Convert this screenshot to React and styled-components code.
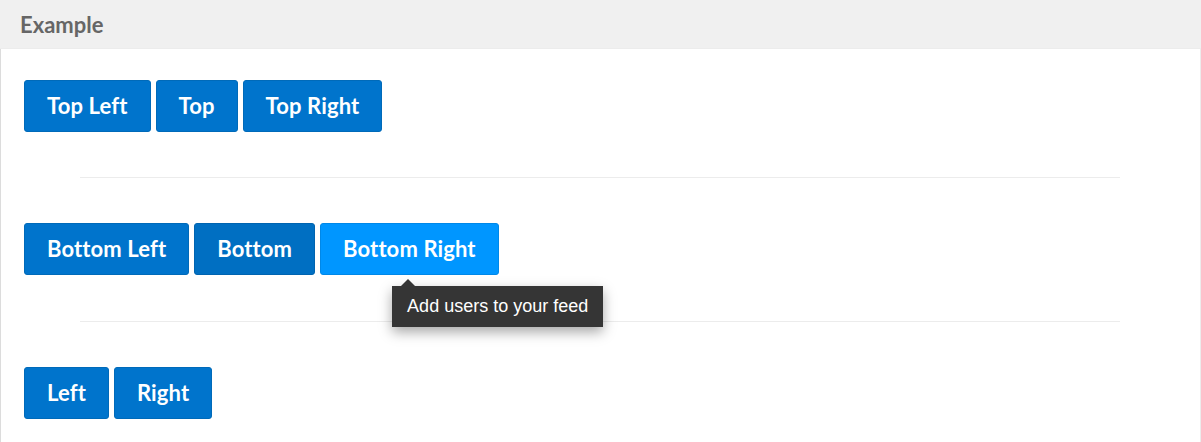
import React from "react";
import styled, { createGlobalStyle } from "styled-components";

const Global = createGlobalStyle`
  html, body { margin: 0; padding: 0; background: #fff; }
  body { font-family: Lato, "Noto Sans", sans-serif; }
`;

const Panel = styled.div`
  width: 1201px;
  height: 442px;
  box-sizing: border-box;
  display: flex;
  flex-direction: column;
  overflow: hidden;
`;

const Header = styled.div`
  height: 48px;
  flex: none;
  background: #f0f0f0;
  display: flex;
  align-items: center;
  padding: 0 20px;
  font-family: Lato, sans-serif;
  font-weight: 700;
  font-size: 22px;
  color: #666;
  border-bottom: 1px solid #ececec;
`;

const Body = styled.div`
  flex: 1;
  border-left: 1px solid #dcdcdc;
  border-right: 1px solid #ececec;
  padding: 31px 0 0 23px;
  display: flex;
  flex-direction: column;
`;

const Row = styled.div`
  display: flex;
  gap: 5px;
  position: relative;
`;

const Divider = styled.hr`
  border: 0;
  border-top: 1px solid #ececec;
  margin: ${(p) => p.$top || 45}px 80px 45px 56px;
  height: 0;
`;

const palette = {
  normal: { bg: "#0074cc", border: "#006ab9" },
  active: { bg: "#006fc2", border: "#0064b0" },
  hover: { bg: "#0096ff", border: "#0088e8" },
};

const Button = styled.button`
  height: 52px;
  box-sizing: border-box;
  padding: 0 22px;
  border: 1px solid ${(p) => palette[p.$state || "normal"].border};
  background: ${(p) => palette[p.$state || "normal"].bg};
  border-radius: 3px;
  color: #fff;
  font-family: Lato, sans-serif;
  font-weight: 700;
  font-size: 22px;
  letter-spacing: 0.12px;
  line-height: 1;
  cursor: pointer;
  position: relative;
`;

const Tooltip = styled.div`
  position: absolute;
  top: 63px;
  left: 72px;
  background: #353535;
  color: #fff;
  font-family: "Liberation Sans", Arial, sans-serif;
  font-size: 18px;
  font-weight: 400;
  white-space: nowrap;
  padding: 0 15px;
  height: 41px;
  display: flex;
  align-items: center;
  box-shadow: 0 5px 12px rgba(0, 0, 0, 0.35);
  z-index: 2;
  &::before {
    content: "";
    position: absolute;
    top: -7px;
    left: 9px;
    border-left: 7px solid transparent;
    border-right: 7px solid transparent;
    border-bottom: 7px solid #353535;
  }
`;

const BRWrap = styled.div`
  position: relative;
  display: flex;
`;

export default function App() {
  return (
    <>
      <Global />
      <Panel>
        <Header>Example</Header>
        <Body>
          <Row>
            <Button>Top Left</Button>
            <Button>Top</Button>
            <Button>Top Right</Button>
          </Row>
          <Divider />
          <Row>
            <Button>Bottom Left</Button>
            <Button $state="active">Bottom</Button>
            <BRWrap>
              <Button $state="hover">Bottom Right</Button>
              <Tooltip>Add users to your feed</Tooltip>
            </BRWrap>
          </Row>
          <Divider $top={46} />
          <Row>
            <Button>Left</Button>
            <Button>Right</Button>
          </Row>
        </Body>
      </Panel>
    </>
  );
}
